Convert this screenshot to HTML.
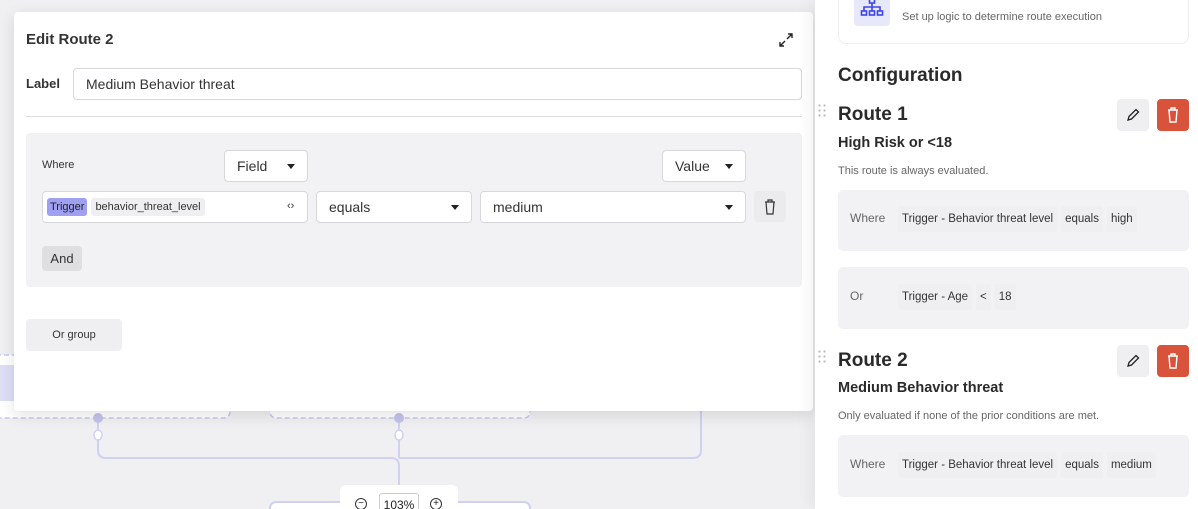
<!DOCTYPE html>
<html><head><meta charset="utf-8"><style>
*{box-sizing:border-box;margin:0;padding:0}
html,body{width:1198px;height:509px;overflow:hidden}
body{background:#f0f0f2;font-family:"Liberation Sans",sans-serif;color:#222;position:relative}
.abs{position:absolute}
.right{left:815px;top:0;width:383px;height:509px;background:#fff;box-shadow:-6px 0 14px rgba(0,0,0,.05)}
.modal{left:14px;top:12px;width:799px;height:399px;background:#fff;border-radius:4px;box-shadow:0 4px 16px rgba(0,0,0,.12)}
.sel{position:absolute;background:#fff;border:1px solid #d8d8dc;border-radius:4px;font-size:14px;color:#333;display:flex;align-items:center;padding-left:12px}
.tri{position:absolute;width:0;height:0;border-left:4px solid transparent;border-right:4px solid transparent;border-top:5px solid #222}
.chip{display:inline-block;background:#efeff1;border-radius:3px;padding:7px 4px;font-size:11.5px;color:#333;margin-right:4px}
.cond{position:absolute;left:838px;width:351px;background:#f2f2f4;border-radius:5px}
.btn{position:absolute;width:32px;height:32px;border-radius:4px}
.grip{position:absolute;width:10px;height:16px;background-image:radial-gradient(circle,#bbb 1px,transparent 1.3px);background-size:5px 5px}
</style></head><body>
<svg class="abs" style="left:0;top:0" width="815" height="509">
<rect x="-10" y="355" width="240" height="63" rx="6" fill="#fff" stroke="#c9c9f2" stroke-dasharray="5 3" stroke-width="1.5"/>
<rect x="0" y="365" width="14" height="36" fill="#dedff7"/>
<rect x="270" y="355" width="260" height="63" rx="6" fill="#fff" stroke="#c9c9f2" stroke-dasharray="5 3" stroke-width="1.5"/>
<path d="M98 418V450q0 8 8 8H391q8 0 8 8V485M399 418V450q0 8-0 8M399 458q0-0 8 0H693q8 0 8-8V400" fill="none" stroke="#d0d0f5" stroke-width="2"/>
<circle cx="98" cy="418" r="5" fill="#c4c4ec"/><circle cx="399" cy="418" r="5" fill="#c4c4ec"/>
<ellipse cx="98" cy="435" rx="4" ry="5" fill="#fff" stroke="#d0d0f5" stroke-width="1.5"/>
<ellipse cx="399" cy="435" rx="4" ry="5" fill="#fff" stroke="#d0d0f5" stroke-width="1.5"/>
<rect x="270" y="502" width="260" height="20" rx="6" fill="#fff" stroke="#d0d0f5" stroke-width="2"/>
</svg>
<div class="abs" style="left:340px;top:485px;width:118px;height:30px;background:#fff;border-radius:6px;font-size:12px">
<span class="abs" style="left:15px;top:13px;width:12px;height:12px;border:1.3px solid #333;border-radius:50%;font-size:10px;line-height:9px;text-align:center">−</span>
<span class="abs" style="left:39px;top:8px;width:40px;height:22px;border:1px solid #ccc;border-radius:3px;text-align:center;line-height:22px">103%</span>
<span class="abs" style="left:90px;top:13px;width:12px;height:12px;border:1.3px solid #333;border-radius:50%;font-size:10px;line-height:9px;text-align:center">+</span>
</div>
<div class="abs modal">
<div class="abs" style="left:12px;top:19px;font-size:15px;font-weight:bold;color:#333">Edit Route 2</div>
<svg class="abs" style="left:764px;top:20px" width="16" height="16" viewBox="0 0 16 16" fill="none" stroke="#222" stroke-width="1.4"><path d="M9 7l5-5M10 2h4v4M7 9l-5 5M2 10v4h4"/></svg>
<div class="abs" style="left:12px;top:64px;font-size:13px;font-weight:bold;color:#333">Label</div>
<div class="abs" style="left:59px;top:56px;width:729px;height:32px;border:1px solid #d8d8dc;border-radius:4px;font-size:14px;padding:7px 12px;color:#333">Medium Behavior threat</div>
<div class="abs" style="left:12px;top:104px;width:776px;height:1px;background:#ddd"></div>
<div class="abs" style="left:12px;top:121px;width:776px;height:154px;background:#f2f2f4;border-radius:4px">
 <div class="abs" style="left:16px;top:26px;font-size:11px;color:#333">Where</div>
 <div class="sel" style="left:198px;top:17px;width:84px;height:32px">Field<span class="tri" style="left:62px;top:13px"></span></div>
 <div class="sel" style="left:636px;top:17px;width:84px;height:32px">Value<span class="tri" style="left:62px;top:13px"></span></div>
 <div class="sel" style="left:16px;top:58px;width:266px;height:32px;padding-left:4px">
  <span style="background:#9fa0f2;border-radius:3px;font-size:11px;padding:3px 3px;color:#222">Trigger</span>
  <span style="background:#efeff1;border-radius:3px;font-size:11px;padding:3px 4px;margin-left:4px;color:#333">behavior_threat_level</span>
  <span class="abs" style="left:244px;top:8px;font-size:11px">‹›</span></div>
 <div class="sel" style="left:290px;top:58px;width:156px;height:32px">equals<span class="tri" style="left:134px;top:13px"></span></div>
 <div class="sel" style="left:454px;top:58px;width:266px;height:32px">medium<span class="tri" style="left:244px;top:13px"></span></div>
 <div class="abs" style="left:728px;top:58px;width:32px;height:31px;background:#ebebed;border-radius:4px">
  <svg class="abs" style="left:10px;top:8px" width="12" height="16" viewBox="0 0 12 16" fill="none" stroke="#333" stroke-width="1.2"><path d="M1 3h10M4 3V1h4v2M2 3l1 12h6l1-12"/></svg></div>
 <div class="abs" style="left:16px;top:113px;width:40px;height:25px;background:#dfdfe1;border-radius:4px;font-size:13px;text-align:center;line-height:25px;color:#333">And</div>
</div>
<div class="abs" style="left:12px;top:307px;width:96px;height:32px;background:#efeff1;border-radius:4px;font-size:11px;text-align:center;line-height:32px;color:#333">Or group</div>
</div>
<div class="abs right"></div>
<div class="abs" style="left:838px;top:-10px;width:351px;height:54px;border:1px solid #eee;border-radius:8px;background:#fff"></div>
<div class="abs" style="left:854px;top:-3px;width:36px;height:29px;background:#e8e8fb;border-radius:4px">
<svg class="abs" style="left:6px;top:1px" width="24" height="20" viewBox="0 0 24 20" fill="none" stroke="#3d45e8" stroke-width="1.6"><rect x="9.5" y="1" width="5" height="4"/><path d="M12 5v4M4 13V9h16v4M12 9v4"/><rect x="1.5" y="13" width="5" height="4"/><rect x="9.5" y="13" width="5" height="4"/><rect x="17.5" y="13" width="5" height="4"/></svg></div>
<div class="abs" style="left:902px;top:11px;font-size:11px;color:#666">Set up logic to determine route execution</div>
<div class="abs" style="left:838px;top:65px;font-size:19px;font-weight:bold;color:#2a2a2a">Configuration</div>
<div class="grip" style="left:817px;top:103px"></div>
<div class="abs" style="left:838px;top:104px;font-size:19px;font-weight:bold;color:#2a2a2a">Route 1</div>
<div class="btn" style="left:1117px;top:99px;background:#efeff1"><svg class="abs" style="left:9px;top:9px" width="14" height="14" viewBox="0 0 14 14" fill="none" stroke="#222" stroke-width="1.3"><path d="M2 12l1-3.5L10 1.5l2.5 2.5L5.5 11z"/></svg></div>
<div class="btn" style="left:1157px;top:99px;background:#d85339"><svg class="abs" style="left:10px;top:8px" width="12" height="16" viewBox="0 0 12 16" fill="none" stroke="#fff" stroke-width="1.4"><path d="M1 3h10M4 3V1h4v2M2 3l1 12h6l1-12"/></svg></div>
<div class="abs" style="left:838px;top:135px;font-size:14.5px;font-weight:bold;color:#2a2a2a">High Risk or &lt;18</div>
<div class="abs" style="left:838px;top:165px;font-size:11px;color:#666">This route is always evaluated.</div>
<div class="cond" style="top:190px;height:61px"><span class="abs" style="left:12px;top:21px;font-size:12px;color:#666">Where</span><div class="abs" style="left:60px;top:16px;white-space:nowrap"><span class="chip">Trigger - Behavior threat level</span><span class="chip">equals</span><span class="chip">high</span></div></div>
<div class="cond" style="top:267px;height:62px"><span class="abs" style="left:12px;top:22px;font-size:12px;color:#666">Or</span><div class="abs" style="left:60px;top:17px;white-space:nowrap"><span class="chip">Trigger - Age</span><span class="chip">&lt;</span><span class="chip">18</span></div></div>
<div class="grip" style="left:817px;top:349px"></div>
<div class="abs" style="left:838px;top:350px;font-size:19px;font-weight:bold;color:#2a2a2a">Route 2</div>
<div class="btn" style="left:1117px;top:345px;background:#efeff1"><svg class="abs" style="left:9px;top:9px" width="14" height="14" viewBox="0 0 14 14" fill="none" stroke="#222" stroke-width="1.3"><path d="M2 12l1-3.5L10 1.5l2.5 2.5L5.5 11z"/></svg></div>
<div class="btn" style="left:1157px;top:345px;background:#d85339"><svg class="abs" style="left:10px;top:8px" width="12" height="16" viewBox="0 0 12 16" fill="none" stroke="#fff" stroke-width="1.4"><path d="M1 3h10M4 3V1h4v2M2 3l1 12h6l1-12"/></svg></div>
<div class="abs" style="left:838px;top:380px;font-size:14.5px;font-weight:bold;color:#2a2a2a">Medium Behavior threat</div>
<div class="abs" style="left:838px;top:410px;font-size:11px;color:#666">Only evaluated if none of the prior conditions are met.</div>
<div class="cond" style="top:435px;height:62px"><span class="abs" style="left:12px;top:22px;font-size:12px;color:#666">Where</span><div class="abs" style="left:60px;top:17px;white-space:nowrap"><span class="chip">Trigger - Behavior threat level</span><span class="chip">equals</span><span class="chip">medium</span></div></div>
</body></html>
